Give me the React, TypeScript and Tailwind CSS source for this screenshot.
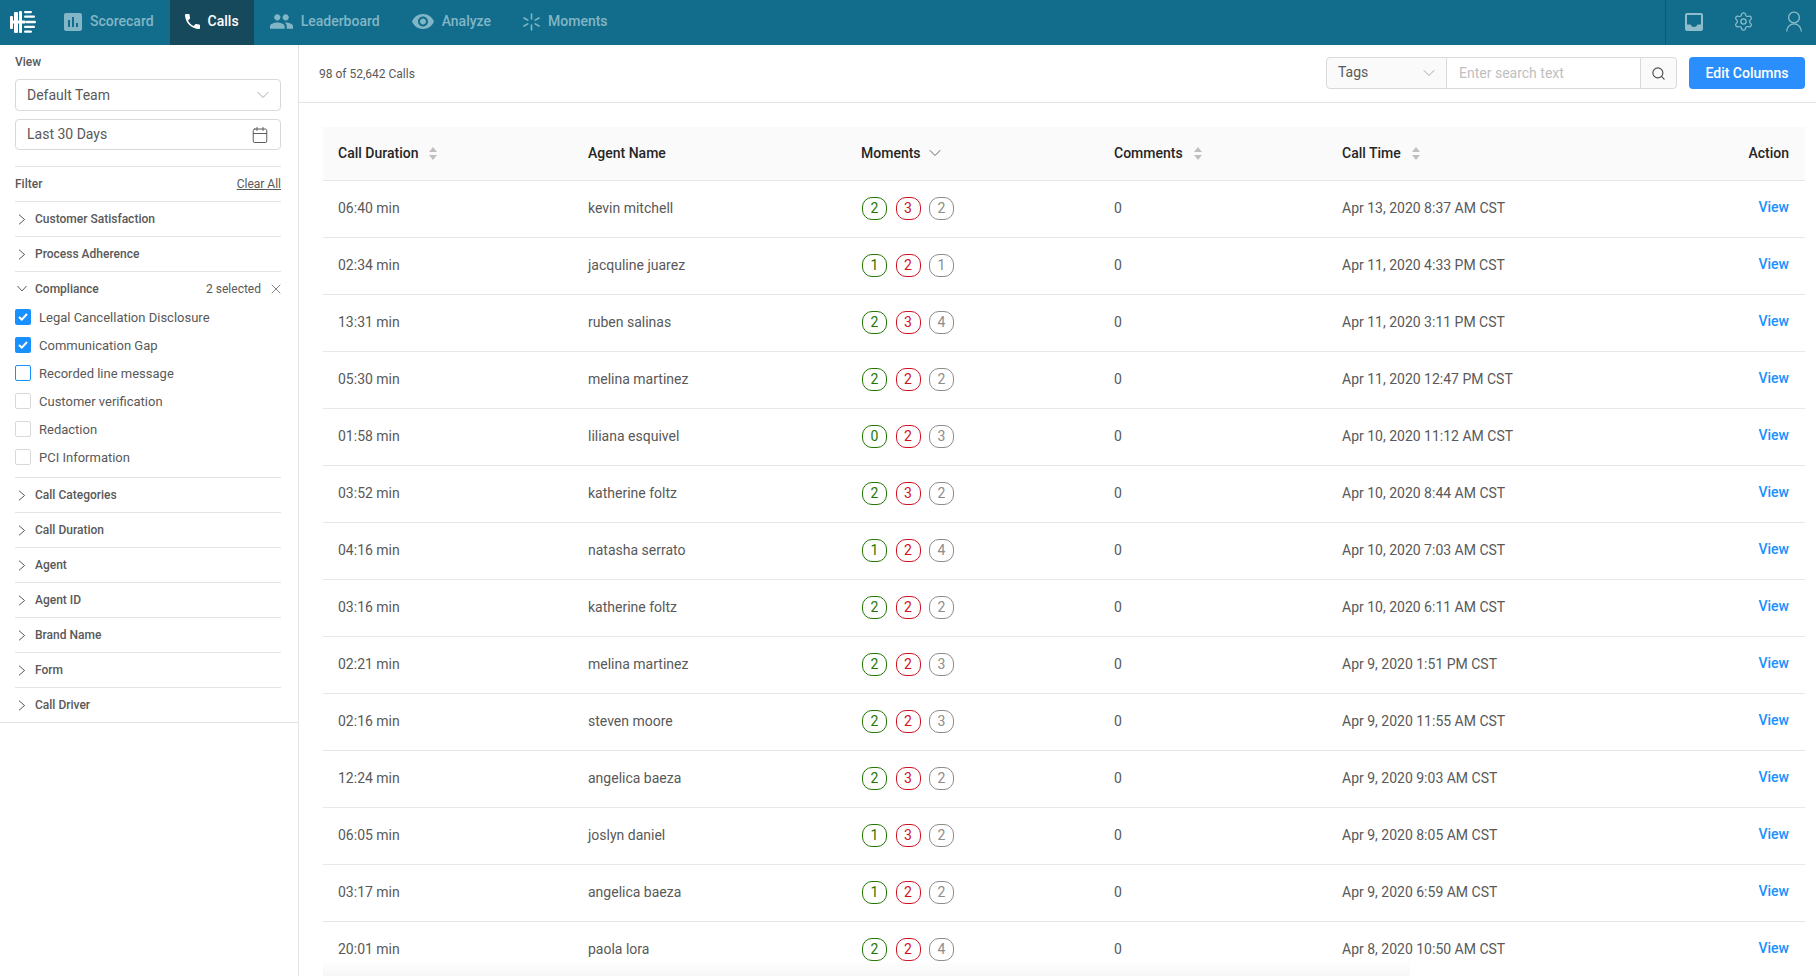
import React from 'react';
import { Calendar, ChevronDown, Search, Settings, X } from 'lucide-react';

const calls = [
  ['06:40 min', 'kevin mitchell', 2, 3, 2, 'Apr 13, 2020 8:37 AM CST'],
  ['02:34 min', 'jacquline juarez', 1, 2, 1, 'Apr 11, 2020 4:33 PM CST'],
  ['13:31 min', 'ruben salinas', 2, 3, 4, 'Apr 11, 2020 3:11 PM CST'],
  ['05:30 min', 'melina martinez', 2, 2, 2, 'Apr 11, 2020 12:47 PM CST'],
  ['01:58 min', 'liliana esquivel', 0, 2, 3, 'Apr 10, 2020 11:12 AM CST'],
  ['03:52 min', 'katherine foltz', 2, 3, 2, 'Apr 10, 2020 8:44 AM CST'],
  ['04:16 min', 'natasha serrato', 1, 2, 4, 'Apr 10, 2020 7:03 AM CST'],
  ['03:16 min', 'katherine foltz', 2, 2, 2, 'Apr 10, 2020 6:11 AM CST'],
  ['02:21 min', 'melina martinez', 2, 2, 3, 'Apr 9, 2020 1:51 PM CST'],
  ['02:16 min', 'steven moore', 2, 2, 3, 'Apr 9, 2020 11:55 AM CST'],
  ['12:24 min', 'angelica baeza', 2, 3, 2, 'Apr 9, 2020 9:03 AM CST'],
  ['06:05 min', 'joslyn daniel', 1, 3, 2, 'Apr 9, 2020 8:05 AM CST'],
  ['03:17 min', 'angelica baeza', 1, 2, 2, 'Apr 9, 2020 6:59 AM CST'],
  ['20:01 min', 'paola lora', 2, 2, 4, 'Apr 8, 2020 10:50 AM CST'],
] as const;

const Logo = () => (
  <svg width="26" height="23" viewBox="0 0 26 23" fill="white">
    <rect x="0" y="5" width="3" height="13" rx="1" />
    <rect x="4" y="1" width="4" height="21" rx="1" />
    <rect x="9" y="0" width="3" height="22" rx="1" />
    <rect x="0" y="9.5" width="15" height="3" />
    <rect x="14" y="0" width="8" height="2.2" rx="1.1" />
    <rect x="14" y="4.6" width="11" height="2.2" rx="1.1" />
    <rect x="15" y="9.8" width="11" height="2.4" rx="1.2" />
    <rect x="14" y="14.8" width="11" height="2.2" rx="1.1" />
    <rect x="14" y="19.6" width="8" height="2.2" rx="1.1" />
  </svg>
);

const ScorecardIcon = () => (
  <svg width="18" height="18" viewBox="3 3 18 18" fill="currentColor">
    <path d="M19 3H5c-1.1 0-2 .9-2 2v14c0 1.1.9 2 2 2h14c1.1 0 2-.9 2-2V5c0-1.1-.9-2-2-2zM9 17H7v-7h2v7zm4 0h-2V7h2v10zm4 0h-2v-4h2v4z" />
  </svg>
);

const PhoneIcon = () => (
  <svg width="15" height="15" viewBox="3 3 18 18" fill="currentColor">
    <path d="M6.62 10.79c1.44 2.83 3.76 5.14 6.59 6.59l2.2-2.2c.27-.27.67-.36 1.02-.24 1.12.37 2.33.57 3.57.57.55 0 1 .45 1 1V20c0 .55-.45 1-1 1-9.39 0-17-7.61-17-17 0-.55.45-1 1-1h3.5c.55 0 1 .45 1 1 0 1.25.2 2.45.57 3.57.11.35.03.74-.25 1.02l-2.2 2.2z" />
  </svg>
);

const PeopleIcon = () => (
  <svg width="23" height="15" viewBox="1 5 22 14" fill="currentColor">
    <path d="M16 11c1.66 0 2.99-1.34 2.99-3S17.66 5 16 5c-1.66 0-3 1.34-3 3s1.34 3 3 3zm-8 0c1.66 0 2.99-1.34 2.99-3S9.66 5 8 5C6.34 5 5 6.34 5 8s1.34 3 3 3zm0 2c-2.33 0-7 1.17-7 3.5V19h14v-2.5c0-2.33-4.67-3.5-7-3.5zm8 0c-.29 0-.62.02-.97.05 1.16.84 1.97 1.97 1.97 3.45V19h6v-2.5c0-2.33-4.67-3.5-7-3.5z" />
  </svg>
);

const EyeIcon = () => (
  <svg width="22" height="15" viewBox="1 4.5 22 15" fill="currentColor">
    <path d="M12 4.5C7 4.5 2.73 7.61 1 12c1.73 4.39 6 7.5 11 7.5s9.27-3.11 11-7.5c-1.73-4.39-6-7.5-11-7.5zM12 17c-2.76 0-5-2.24-5-5s2.24-5 5-5 5 2.24 5 5-2.24 5-5 5zm0-8c-1.66 0-3 1.34-3 3s1.34 3 3 3 3-1.34 3-3-1.34-3-3-3z" />
  </svg>
);

const SparkIcon = () => (
  <svg width="17" height="18" viewBox="0 0 17 18" fill="none" stroke="currentColor" strokeWidth="1.6" strokeLinecap="round">
    <path d="M8.5 1v5M8.5 12v5M1 5l3.8 2.1M12.2 10.9l3.8 2.1M1 13l3.8-2.1M12.2 7.1l3.8-2.1" />
  </svg>
);

const InboxIcon = () => (
  <svg width="18" height="18" viewBox="0 0 18 18">
    <rect x="0" y="0" width="18" height="18" rx="2" fill="#8fbccb" />
    <path d="M2 2h14v9.5h-3.6c-.4 1.5-1.8 2.5-3.4 2.5s-3-1-3.4-2.5H2z" fill="#116d8b" />
  </svg>
);

const UserIcon = () => (
  <svg width="16" height="21" viewBox="0 0 16 21" fill="none" stroke="currentColor" strokeWidth="1.3">
    <circle cx="8" cy="6.5" r="5.4" />
    <path d="M.7 20.5c0-4.2 3.2-7.6 7.3-7.6s7.3 3.4 7.3 7.6" />
  </svg>
);

const SortIcon = () => (
  <svg width="8" height="13" viewBox="0 0 8 13" fill="#bfbfbf" className="ml-[11px] mt-[1px] shrink-0">
    <path d="M4 0l4 5H0zM4 13L0 8h8z" />
  </svg>
);

const ArrowRight = () => (
  <svg width="8" height="11" viewBox="0 0 8 11" fill="none" stroke="#595959" strokeWidth="1">
    <path d="M1 .7l5.6 4.8L1 10.3" />
  </svg>
);

const ArrowDown = () => (
  <svg width="10" height="7" viewBox="0 0 10 7" fill="none" stroke="#595959" strokeWidth="1">
    <path d="M.5 1l4.5 5 4.5-5" />
  </svg>
);

const NavItem = ({ icon, label, active }: { icon: React.ReactNode; label: string; active?: boolean }) => (
  <div className={`flex h-full items-center gap-2 pb-[2px] text-[14px] font-medium ${active ? 'bg-[#17495c] px-[15px] text-white' : 'px-4 text-[#82b6c7]'}`}>
    {icon}
    <span>{label}</span>
  </div>
);

const FilterHeader = ({ label }: { label: string }) => (
  <div className="flex h-[35px] items-center border-t border-[#e3e3e3] text-[12px] font-medium text-[#595959]">
    <span className="flex w-[20px] justify-start pl-[3px]">
      <ArrowRight />
    </span>
    <span>{label}</span>
  </div>
);

const Check = ({ label, state }: { label: string; state: 'on' | 'focus' | 'off' }) => (
  <div className="flex h-[28px] items-center gap-[8px] text-[13px] text-[#595959]">
    {state === 'on' ? (
      <span className="flex size-[16px] items-center justify-center rounded-[2px] bg-[#1890ff]">
        <svg width="10" height="8" viewBox="0 0 10 8" fill="none" stroke="white" strokeWidth="2">
          <path d="M1 4l2.8 2.6L9 1" />
        </svg>
      </span>
    ) : (
      <span className={`size-[16px] rounded-[2px] border ${state === 'focus' ? 'border-[#1890ff]' : 'border-[#d9d9d9]'}`} />
    )}
    <span className="mt-[2px]">{label}</span>
  </div>
);

const Badge = ({ value, color }: { value: number; color: string }) => (
  <span className={`flex h-[23px] w-[25px] items-center justify-center rounded-[10px] border text-[14px] ${color}`}>{value}</span>
);

export default function App() {
  return (
    <div className="relative flex h-[976px] w-[1816px] flex-col overflow-hidden bg-white font-['Roboto',sans-serif]">
      <header className="flex h-[45px] shrink-0 items-center bg-[#116d8b]">
        <div className="flex w-[48px] justify-start pl-[10px]">
          <Logo />
        </div>
        <NavItem icon={<ScorecardIcon />} label="Scorecard" />
        <NavItem icon={<PhoneIcon />} label="Calls" active />
        <NavItem icon={<PeopleIcon />} label="Leaderboard" />
        <NavItem icon={<EyeIcon />} label="Analyze" />
        <NavItem icon={<SparkIcon />} label="Moments" />
        <div className="ml-auto flex h-full items-center border-l border-[#0f5a73] pb-[2px] pl-[19px] pr-[14px] text-[#8fbccb]">
          <InboxIcon />
          <Settings size={21} strokeWidth={1.4} className="ml-[30px]" />
          <div className="ml-[32px]">
            <UserIcon />
          </div>
        </div>
      </header>

      <div className="flex min-h-0 flex-1">
        <aside className="w-[299px] shrink-0 border-r border-[#e3e3e3]">
          <div className="border-b border-[#e3e3e3]">
            <div className="px-[15px] pr-[17px]">
              <div className="flex h-[34px] items-center text-[12px] font-medium text-[#595959]">View</div>
              <div className="flex h-[32px] items-center justify-between rounded-[4px] border border-[#d9d9d9] pl-[11px] pr-[7px] text-[14px] text-[#595959]">
                Default Team
                <ChevronDown size={20} strokeWidth={0.9} className="text-[#8c8c8c]" />
              </div>
              <div className="mt-[8px] flex h-[31px] items-center justify-between rounded-[4px] border border-[#d9d9d9] pl-[11px] pr-[11px] text-[14px] text-[#595959]">
                Last 30 Days
                <Calendar size={18} strokeWidth={1.3} className="text-[#595959]" />
              </div>
              <div className="mt-[16px] flex h-[35px] items-center justify-between border-t border-[#e3e3e3] text-[12px] text-[#595959]">
                <span className="font-medium">Filter</span>
                <span className="underline">Clear All</span>
              </div>
              <FilterHeader label="Customer Satisfaction" />
              <FilterHeader label="Process Adherence" />
              <div className="border-t border-[#e3e3e3] pb-[6px]">
                <div className="flex h-[31px] items-center pt-[2px] text-[12px] text-[#595959]">
                  <span className="flex w-[20px] justify-start pl-[2px]">
                    <ArrowDown />
                  </span>
                  <span className="font-medium">Compliance</span>
                  <span className="ml-auto">2 selected</span>
                  <X size={16} strokeWidth={1.1} className="ml-[7px] mr-[-3px]" />
                </div>
                <Check label="Legal Cancellation Disclosure" state="on" />
                <Check label="Communication Gap" state="on" />
                <Check label="Recorded line message" state="focus" />
                <Check label="Customer verification" state="off" />
                <Check label="Redaction" state="off" />
                <Check label="PCI Information" state="off" />
              </div>
              <FilterHeader label="Call Categories" />
              <FilterHeader label="Call Duration" />
              <FilterHeader label="Agent" />
              <FilterHeader label="Agent ID" />
              <FilterHeader label="Brand Name" />
              <FilterHeader label="Form" />
              <FilterHeader label="Call Driver" />
            </div>
          </div>
        </aside>

        <main className="min-w-0 flex-1">
          <div className="flex h-[58px] items-center justify-between border-b border-[#e3e3e3] pb-[1px] pl-[20px] pr-[11px]">
            <span className="mt-[2px] text-[12px] text-[#595959]">98 of 52,642 Calls</span>
            <div className="flex items-center">
              <div className="flex h-[32px] w-[121px] items-center justify-between rounded-l-[4px] border border-[#d9d9d9] bg-[#fafafa] pb-[1px] pl-[11px] pr-[7px] text-[14px] text-[#595959]">
                Tags
                <ChevronDown size={20} strokeWidth={0.9} className="text-[#8c8c8c]" />
              </div>
              <div className="flex h-[32px] w-[193px] items-center border-y border-[#d9d9d9] pl-[12px] text-[14px] text-[#bfbfbf]">Enter search text</div>
              <div className="flex h-[32px] w-[37px] items-center justify-center rounded-r-[4px] border border-[#d9d9d9] bg-[#fafafa]">
                <Search size={15} strokeWidth={1.8} className="text-[#4a4a4a]" />
              </div>
              <div className="ml-[12px] flex h-[32px] w-[116px] items-center justify-center rounded-[4px] bg-[#2a8ffc] text-[14px] font-medium text-white">
                Edit Columns
              </div>
            </div>
          </div>

          <div className="pl-[24px] pt-[24px]">
            <table className="w-[1482px] table-fixed border-collapse text-[14px] text-[#595959]">
              <colgroup>
                <col className="w-[249px]" />
                <col className="w-[273px]" />
                <col className="w-[253px]" />
                <col className="w-[228px]" />
                <col className="w-[384px]" />
                <col className="w-[95px]" />
              </colgroup>
              <thead>
                <tr className="h-[53px] border-b border-[#e8e8e8] bg-[#fafafa] text-left font-medium text-[#262626]">
                  <th className="pl-[15px] font-medium">
                    <span className="flex items-center">Call Duration<SortIcon /></span>
                  </th>
                  <th className="pl-[16px] font-medium">Agent Name</th>
                  <th className="pl-[16px] font-medium">
                    <span className="flex items-center">Moments<ChevronDown size={20} strokeWidth={1.1} className="ml-[4px] text-[#595959]" /></span>
                  </th>
                  <th className="pl-[16px] font-medium">
                    <span className="flex items-center">Comments<SortIcon /></span>
                  </th>
                  <th className="pl-[16px] font-medium">
                    <span className="flex items-center">Call Time<SortIcon /></span>
                  </th>
                  <th className="pr-[16px] text-right font-medium">Action</th>
                </tr>
              </thead>
              <tbody>
                {calls.map((call, i) => (
                  <tr key={i} className="h-[57px] border-b border-[#e8e8e8]">
                    <td className="pl-[15px]">{call[0]}</td>
                    <td className="pl-[16px]">{call[1]}</td>
                    <td className="pl-[16px]">
                      <div className="ml-[1px] flex gap-[8.5px]">
                        <Badge value={call[2]} color="border-[#237804] text-[#237804]" />
                        <Badge value={call[3]} color="border-[#cf1322] text-[#cf1322]" />
                        <Badge value={call[4]} color="border-[#8c8c8c] text-[#8c8c8c]" />
                      </div>
                    </td>
                    <td className="pl-[16px]">0</td>
                    <td className="pl-[16px]">{call[5]}</td>
                    <td className="pb-[2px] pr-[16px] text-right font-medium text-[#1890ff]">View</td>
                  </tr>
                ))}
              </tbody>
            </table>
          </div>
        </main>
      </div>

      <div className="pointer-events-none absolute bottom-0 left-[323px] h-[16px] w-[1087px] bg-gradient-to-b from-transparent to-[#f7f7f7]" />
    </div>
  );
}
